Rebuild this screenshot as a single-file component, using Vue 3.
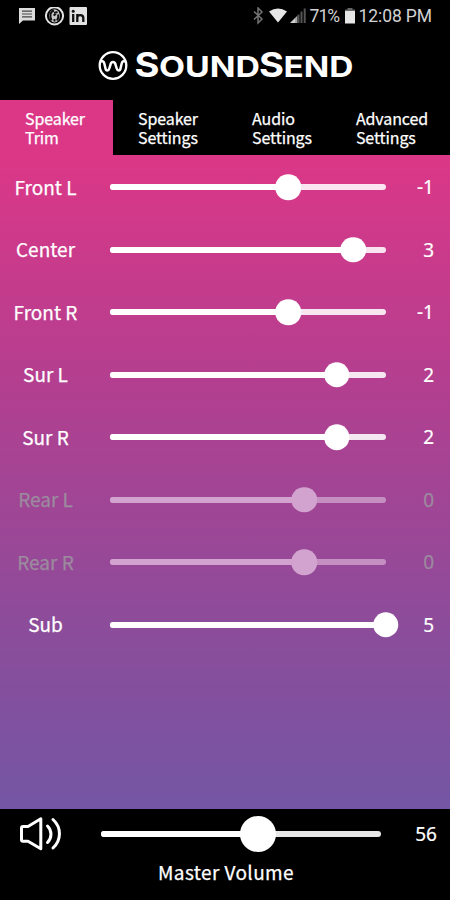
<template>
  <div class="app">
    <!-- status bar -->
    <div class="status-bar">
      <svg class="status-left" width="72" height="20" viewBox="0 0 72 20">
        <path d="M1 1h16v12.5H5L1 17z" fill="#dcdcdc" />
        <path d="M4 4.2h10M4 7h10M4 9.8h10" stroke="#444" stroke-width="1.2" />
        <circle cx="36.5" cy="8.8" r="8.6" fill="none" stroke="#e4e4e4" stroke-width="2" />
        <ellipse cx="36.5" cy="8.8" rx="5.4" ry="6.6" fill="#c8c8c8" />
        <path d="M33.500 13.500c-2-4-1.500-9 2.500-10M36 6l3.500-1M35.500 8.500l2.500-1.500M40 7.500c.8 2 .3 4-1 6M36.500 12v2.500" fill="none" stroke="#111" stroke-width="2" />
        <rect x="51.500" y="0" width="17.500" height="18" rx="1" fill="#e2e2e2" />
        <circle cx="55.200" cy="4.200" r="1.500" fill="#111" />
        <path d="M55.200 7v8M59.300 15V7M59.300 10.500q0-2.400 3-2.400 3 0 3 2.900v4" fill="none" stroke="#111" stroke-width="2.300" />
      </svg>
      <div class="status-right">
        <svg width="56" height="18" viewBox="0 0 56 18">
          <path d="M3 4.500l8 7.500-4 4V1l4 4-8 7.500" fill="none" stroke="#737373" stroke-width="1.500" />
          <path d="M18 4.500Q27 -1.500 36 4.500L27 15.500z" fill="#e6e6e6" />
          <path d="M39 16l5-5v5z" fill="#d0d0d0" />
          <path d="M44 11l2.500-2.500V16H44z" fill="#a8a8a8" />
          <path d="M47.500 7.500V16M50.500 4.500V16M53.700 1.500V16" stroke="#555" stroke-width="2" />
        </svg>
        <span class="battery-text">71%</span>
        <svg width="12" height="18" viewBox="0 0 12 18">
          <path d="M1 4V2.500h2.500V1h5v1.500H11V4z" fill="#666" />
          <rect x="1" y="4" width="10" height="12.500" fill="#e6e6e6" />
        </svg>
        <span class="clock">{{ clock }}</span>
      </div>
    </div>

    <!-- logo -->
    <div class="brand">
      <svg width="270" height="52" viewBox="0 -10 270 52" fill="#fff">
        <circle cx="18" cy="17.500" r="13.300" fill="none" stroke="#fff" stroke-width="2.300" />
        <path d="M5 13.200h2.300c1.200 0 1.600.8 2 2.300l1.200 5c.5 2.600 3.100 2.600 3.800 0l1.500-4.800c.6-2.400 3.800-2.400 4.400 0l1.500 4.800c.7 2.600 3.300 2.600 3.800 0l1.200-5c.4-1.500.8-2.300 2-2.300H31" fill="none" stroke="#fff" stroke-width="2.500" />
        <text class="cap" x="39.500" y="29.300" textLength="25" lengthAdjust="spacingAndGlyphs">S</text>
        <text class="small" x="64" y="29.300" textLength="101" lengthAdjust="spacingAndGlyphs">OUND</text>
        <text class="cap" x="164" y="29.300" textLength="25" lengthAdjust="spacingAndGlyphs">S</text>
        <text class="small" x="188.500" y="29.300" textLength="70" lengthAdjust="spacingAndGlyphs">END</text>
      </svg>
    </div>

    <nav class="tabs">
      <button
        v-for="(tab, index) in tabs"
        :key="index"
        :class="['tab', { active: index === activeTab }]"
        @click="activeTab = index"
      >
        <span class="tab-text">{{ tab[0] }}<br>{{ tab[1] }}</span>
      </button>
    </nav>

    <!-- speaker trim sliders -->
    <main class="trim">
      <div
        v-for="speaker in speakers"
        :key="speaker.name"
        :class="['row', { disabled: speaker.disabled }]"
      >
        <div class="label">{{ speaker.name }}</div>
        <div class="track" @click="setTrim(speaker, $event)">
          <div class="fill" :style="{ width: trimPercent(speaker.value) + '%' }"></div>
          <div class="thumb" :style="{ left: trimPercent(speaker.value) + '%' }"></div>
        </div>
        <div class="value">{{ speaker.value }}</div>
      </div>
    </main>

    <footer class="master">
      <div class="master-row">
        <svg class="volume-icon" width="46" height="36" viewBox="0 0 46 36" fill="none" stroke="#fff" stroke-width="3" stroke-linejoin="round" stroke-linecap="round">
          <path d="M5 10.500h5L22.800 2.800v30L10 25.300H5c-1 0-1.500-.5-1.500-1.500V12c0-1 .5-1.500 1.500-1.500z" />
          <path d="M29.500 10c4.600 4.500 4.600 12 0 16.500M35 3.500c8.600 8 8.600 20.500 0 28.500" />
        </svg>
        <div class="track" @click="setVolume">
          <div class="fill" :style="{ width: volume + '%' }"></div>
          <div class="thumb" :style="{ left: volume + '%' }"></div>
        </div>
        <div class="value">{{ volume }}</div>
      </div>
      <div class="master-label">Master Volume</div>
    </footer>
  </div>
</template>

<script setup>
import { ref } from 'vue'

const MIN_TRIM = -12
const MAX_TRIM = 5

const clock = ref('12:08 PM')
const activeTab = ref(0)
const volume = ref(56)

const tabs = [
  ['Speaker', 'Trim'],
  ['Speaker', 'Settings'],
  ['Audio', 'Settings'],
  ['Advanced', 'Settings']
]

const speakers = ref([
  { name: 'Front L', value: -1 },
  { name: 'Center', value: 3 },
  { name: 'Front R', value: -1 },
  { name: 'Sur L', value: 2 },
  { name: 'Sur R', value: 2 },
  { name: 'Rear L', value: 0, disabled: true },
  { name: 'Rear R', value: 0, disabled: true },
  { name: 'Sub', value: 5 }
])

function trimPercent(value) {
  return ((value - MIN_TRIM) / (MAX_TRIM - MIN_TRIM)) * 100
}

function clickRatio(event) {
  const rect = event.currentTarget.getBoundingClientRect()
  return Math.min(1, Math.max(0, (event.clientX - rect.left) / rect.width))
}

function setTrim(speaker, event) {
  if (speaker.disabled) return
  speaker.value = Math.round(MIN_TRIM + clickRatio(event) * (MAX_TRIM - MIN_TRIM))
}

function setVolume(event) {
  volume.value = Math.round(clickRatio(event) * 100)
}
</script>

<style>
body {
  margin: 0;
  background: #000;
}
</style>

<style scoped>
.app {
  display: flex;
  flex-direction: column;
  width: 450px;
  height: 900px;
  overflow: hidden;
  background: #000;
  color: #fff;
  font-family: "Noto Sans CJK SC", "Noto Sans", sans-serif;
}

.status-bar {
  display: flex;
  justify-content: space-between;
  box-sizing: border-box;
  height: 38px;
  padding: 7px 18px 0 18px;
}

.status-right {
  display: flex;
  height: 18px;
  align-items: center;
  color: #d2d2d2;
  font: 17.5px/18px Roboto, sans-serif;
}

.battery-text {
  width: 30px;
  margin: 0 4px 0 3px;
  letter-spacing: -1px;
}

.clock {
  margin-left: 3px;
  letter-spacing: -0.1px;
}

.brand {
  display: flex;
  height: 62px;
  padding-left: 95px;
}

.brand text {
  font-family: Inter, sans-serif;
  font-weight: 700;
}

.cap {
  font-size: 34px;
}

.small {
  font-size: 29px;
}

.tabs {
  display: flex;
  height: 55px;
}

.tab {
  flex: 1;
  display: flex;
  justify-content: center;
  padding: 9px 3px 0 0;
  border: none;
  background: #000;
  color: #fff;
  font: 16px/19px "Noto Sans CJK SC", sans-serif;
  text-align: left;
  cursor: pointer;
}

.tab:nth-child(3) {
  padding: 9px 0 0 1px;
}

.tab-text {
  letter-spacing: -0.1px;
  -webkit-text-stroke: 0.25px currentColor;
}

.tab.active {
  background: #dc3787;
}

.trim {
  height: 654px;
  box-sizing: border-box;
  padding-top: 1px;
  background: linear-gradient(#dc3787, #b23f90 36%, #8a4d9b 74%, #7356a4);
}

.row {
  display: flex;
  align-items: center;
  height: 62.5px;
}

.label {
  width: 91px;
  margin-right: 19px;
  padding-bottom: 2px;
  text-align: center;
  font-size: 19px;
  -webkit-text-stroke: 0.25px currentColor;
}

.track {
  position: relative;
  width: 275.5px;
  height: 6px;
  border-radius: 3px;
  background: rgba(255, 255, 255, 0.87);
  cursor: pointer;
}

.fill {
  height: 6px;
  border-radius: 3px;
  background: #fff;
}

.thumb {
  position: absolute;
  top: 50%;
  width: 25.5px;
  height: 25.5px;
  border-radius: 50%;
  background: #fff;
  transform: translate(-50%, -50%);
}

.value {
  flex: 1;
  padding-right: 16px;
  text-align: right;
  font: 19px "Noto Sans", sans-serif;
  -webkit-text-stroke: 0.2px currentColor;
}

.disabled .label,
.disabled .value {
  color: #9c8a9e;
}

.disabled .track {
  background: #c58fc1;
}

.disabled .fill,
.disabled .thumb {
  background: #d1a3ce;
}

.master {
  height: 91px;
}

.master-row {
  display: flex;
  align-items: center;
  height: 49px;
  padding-left: 18px;
}

.volume-icon {
  margin-right: 37px;
}

.master .track {
  width: 280px;
  background: #e8e8e8;
}

.master .thumb {
  width: 36px;
  height: 36px;
}

.master .value {
  padding-right: 13px;
}

.master-label {
  padding-left: 2px;
  text-align: center;
  font-size: 19px;
  line-height: 28px;
  letter-spacing: 0.4px;
  -webkit-text-stroke: 0.25px currentColor;
}
</style>
